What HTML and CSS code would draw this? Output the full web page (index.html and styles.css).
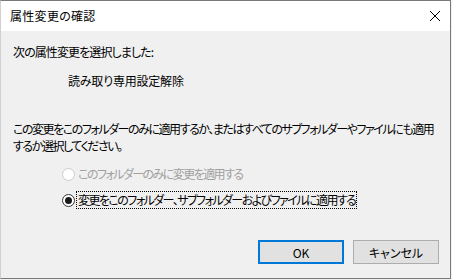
FILE: index.html
```html
<!DOCTYPE html>
<html lang="ja">
<head>
<meta charset="utf-8">
<link rel="stylesheet" href="styles.css">
</head>
<body>
<div class="window">
  <div class="titlebar">
    <span class="title">属性変更の確認</span>
    <svg class="close" width="12" height="12" viewBox="0 0 12 12"><path d="M1 1 L11 11 M11 1 L1 11" stroke="#000" stroke-width="1" fill="none"/></svg>
  </div>
  <div class="content">
    <p class="line lead">次の属性変更を選択しました:</p>
    <p class="line attr">読み取り専用設定解除</p>
    <p class="line para">この変更をこのフォルダーのみに適用するか、またはすべてのサブフォルダーやファイルにも適用<br>するか選択してください。</p>
    <div class="options">
      <div class="opt disabled"><span class="radio"></span><span class="label">このフォルダーのみに変更を適用する</span></div>
      <div class="opt"><span class="radio checked"></span><span class="label focus">変更をこのフォルダー、サブフォルダーおよびファイルに適用する</span></div>
    </div>
    <div class="buttons">
      <button class="btn default">OK</button>
      <button class="btn">キャンセル</button>
    </div>
  </div>
</div>
</body>
</html>
```

FILE: styles.css
```css
html, body {
  margin: 0;
  padding: 0;
  background: #f0f0f0;
}
body {
  font-family: "Noto Sans CJK JP", "Noto Sans", sans-serif;
  font-size: 12px;
  font-feature-settings: "palt";
  color: #000;
}
.window {
  width: 451px;
  height: 279px;
  box-sizing: border-box;
  border: 1px solid #7a7a7a;
  border-left-color: #d0d0d0;
  background: #f0f0f0;
  display: flex;
  flex-direction: column;
}
.titlebar {
  height: 30px;
  background: #fff;
  display: flex;
  align-items: center;
  justify-content: space-between;
  padding: 0 9px 0 9px;
}
.title {
  line-height: 17px;
  margin-top: -1px;
  letter-spacing: 0.3px;
}
.content {
  flex: 1;
  padding: 12px 0 0 12px;
  display: flex;
  flex-direction: column;
}
.line {
  margin: 0;
  line-height: 17px;
  white-space: nowrap;
}
.lead {
  letter-spacing: -0.9px;
}
.attr {
  margin-top: 12px;
  padding-left: 55px;
  letter-spacing: -0.2px;
}
.para {
  margin-top: 31px;
  letter-spacing: -1.45px;
}
.options {
  margin-top: 10px;
  padding-left: 49px;
  display: flex;
  flex-direction: column;
  gap: 6px;
}
.opt {
  display: flex;
  align-items: center;
  height: 20px;
}
.radio {
  width: 13px;
  height: 13px;
  box-sizing: border-box;
  border-radius: 50%;
  border: 1px solid #333;
  background: #fff;
  position: relative;
  flex: none;
  margin-right: 1px;
}
.disabled .radio {
  border-color: #cccccc;
}
.disabled .label {
  color: #a0a0a0;
}
.radio.checked::after {
  content: "";
  position: absolute;
  left: 2px;
  top: 2px;
  width: 7px;
  height: 7px;
  border-radius: 50%;
  background: #1a1a1a;
}
.label {
  line-height: 16px;
  padding: 0 1px;
  border: 1px solid transparent;
  letter-spacing: -1.55px;
  white-space: nowrap;
}
.label.focus {
  border: 1px dotted #000;
}
.buttons {
  margin-top: auto;
  margin-bottom: 14px;
  display: flex;
  justify-content: flex-end;
  gap: 9px;
  padding-right: 11px;
}
.btn {
  width: 86px;
  height: 24px;
  box-sizing: border-box;
  font-family: inherit;
  font-size: 12px;
  font-feature-settings: "palt";
  background: #e1e1e1;
  border: 1px solid #adadad;
  color: #000;
  padding: 0;
  margin: 0;
}
.btn.default {
  border: 2px solid #0078d7;
}
```
